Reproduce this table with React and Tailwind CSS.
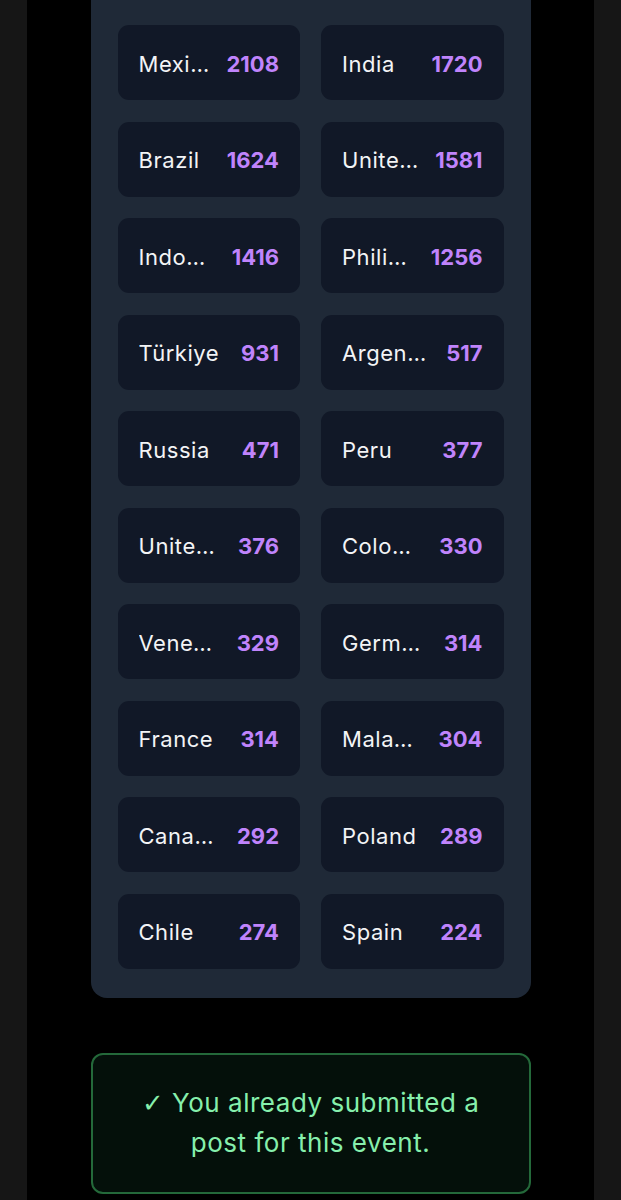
import React from "react";

const countries = [
  ["Mexico", 2108],
  ["India", 1720],
  ["Brazil", 1624],
  ["United States", 1581],
  ["Indonesia", 1416],
  ["Philippines", 1256],
  ["Türkiye", 931],
  ["Argentina", 517],
  ["Russia", 471],
  ["Peru", 377],
  ["United Kingdom", 376],
  ["Colombia", 330],
  ["Venezuela", 329],
  ["Germany", 314],
  ["France", 314],
  ["Malaysia", 304],
  ["Canada", 292],
  ["Poland", 289],
  ["Chile", 274],
  ["Spain", 224],
];

const CountryCard = ({ name, count }) => {
  return (
    <div className="flex h-[75px] items-center justify-between gap-4 rounded-[11px] bg-[#111827] px-[21px] pt-[3px]">
      <span className="min-w-0 truncate text-[22px] tracking-[0.025em] text-[#f3f4f6]">{name}</span>
      <span className="shrink-0 text-[22px] font-bold text-[#c084fc]">{count}</span>
    </div>
  );
};

const App = () => {
  return (
    <div
      className="flex h-[1200px] justify-center overflow-hidden bg-[#161616]"
      style={{ fontFamily: "Inter, 'Noto Sans', sans-serif" }}
    >
      <div className="flex w-[567px] flex-col items-center bg-black">
        <div className="-mt-[20px] w-[440px] rounded-2xl bg-[#1f2937] px-[27px] pt-[45px] pb-[29px]">
          <div className="grid grid-cols-2 gap-x-[21px] gap-y-[21.5px]">
            {countries.map(([name, count]) => (
              <CountryCard key={name} name={name} count={count} />
            ))}
          </div>
        </div>
        <div className="mt-[55px] flex h-[141px] w-[440px] items-center justify-center rounded-xl border-2 border-[#24693a] bg-[#04100a] px-8">
          <p className="text-center text-[26px] leading-[40px] tracking-[0.02em] text-[#86efac]">
            <span style={{ fontFamily: "'DejaVu Sans', sans-serif" }} className="font-light">✓</span> You already submitted a post for this event.
          </p>
        </div>
      </div>
    </div>
  );
};

export default App;
